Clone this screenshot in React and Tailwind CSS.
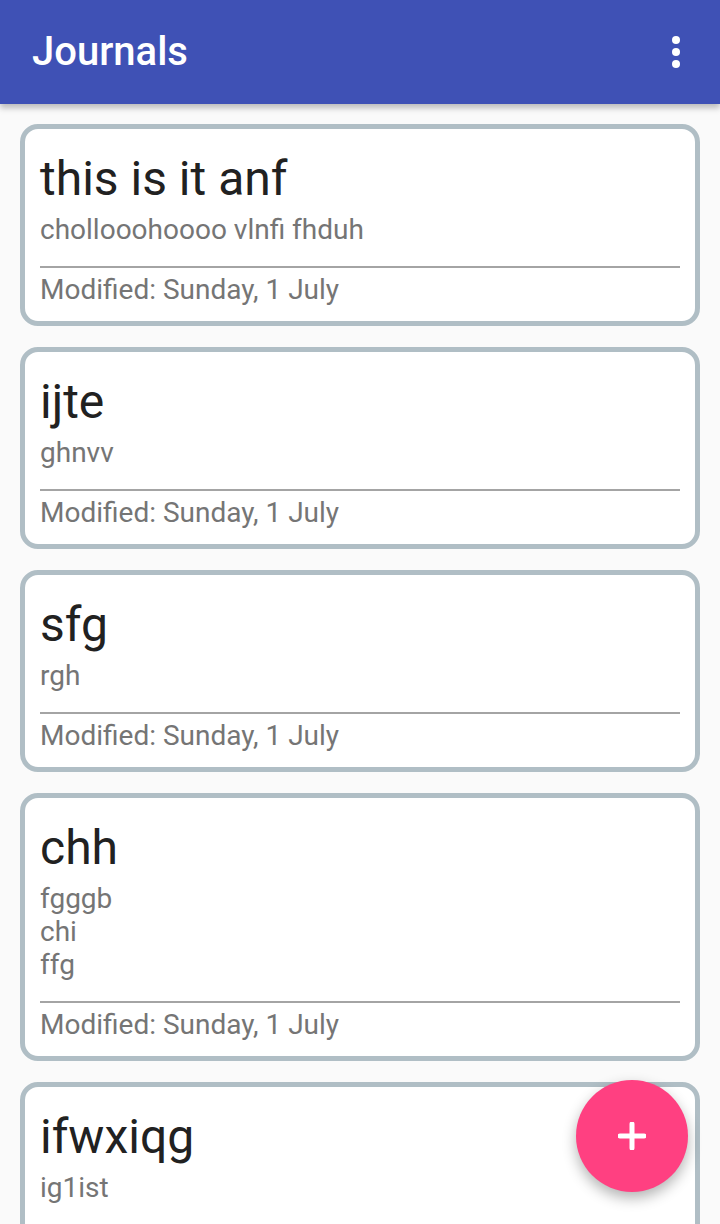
const journals = [
  { title: "this is it anf", body: ["chollooohoooo vlnfi fhduh"] },
  { title: "ijte", body: ["ghnvv"] },
  { title: "sfg", body: ["rgh"] },
  { title: "chh", body: ["fgggb", "chi", "ffg"] },
  { title: "ifwxiqg", body: ["ig1ist"] },
];

const JournalCard = ({ journal }) => (
  <div className="rounded-[18px] border-[5px] border-[#b0bec5] bg-white px-[15px] pt-[22px] pb-[15px]">
    <p className="text-[48px] leading-[56px] text-[#212121]">{journal.title}</p>
    <div className="mt-[6px] text-[28px] leading-[33px] text-[#757575]">
      {journal.body.map((line, i) => (
        <p key={i}>{line}</p>
      ))}
    </div>
    <div className="mt-[20px] h-[2px] bg-[#a4a4a4]" />
    <p className="mt-[5px] text-[28px] leading-[33px] text-[#757575]">Modified: Sunday, 1 July</p>
  </div>
);

export default function App() {
  return (
    <div
      className="relative h-[1224px] w-[720px] overflow-hidden bg-[#fafafa]"
      style={{ fontFamily: "Roboto, 'Noto Sans', sans-serif" }}
    >
      <header className="relative z-10 flex h-[104px] items-center justify-between bg-[#3f51b5] pl-[32px] pr-[40px] shadow-[0_4px_6px_rgba(0,0,0,0.25)]">
        <h1 className="text-[40px] font-medium leading-none text-white">Journals</h1>
        <div className="flex flex-col gap-[4px]">
          <span className="h-[8px] w-[8px] rounded-full bg-white" />
          <span className="h-[8px] w-[8px] rounded-full bg-white" />
          <span className="h-[8px] w-[8px] rounded-full bg-white" />
        </div>
      </header>

      <div className="flex flex-col gap-[21px] px-[20px] pt-[20px]">
        {journals.map((j, i) => (
          <JournalCard key={i} journal={j} />
        ))}
      </div>

      <button className="absolute bottom-[32px] right-[32px] flex h-[112px] w-[112px] items-center justify-center rounded-full bg-[#ff4081] shadow-[0_6px_14px_rgba(0,0,0,0.3)]">
        <svg width="28" height="28" viewBox="0 0 28 28">
          <path d="M14 2v24M2 14h24" stroke="white" strokeWidth="5" strokeLinecap="round" />
        </svg>
      </button>
    </div>
  );
}
